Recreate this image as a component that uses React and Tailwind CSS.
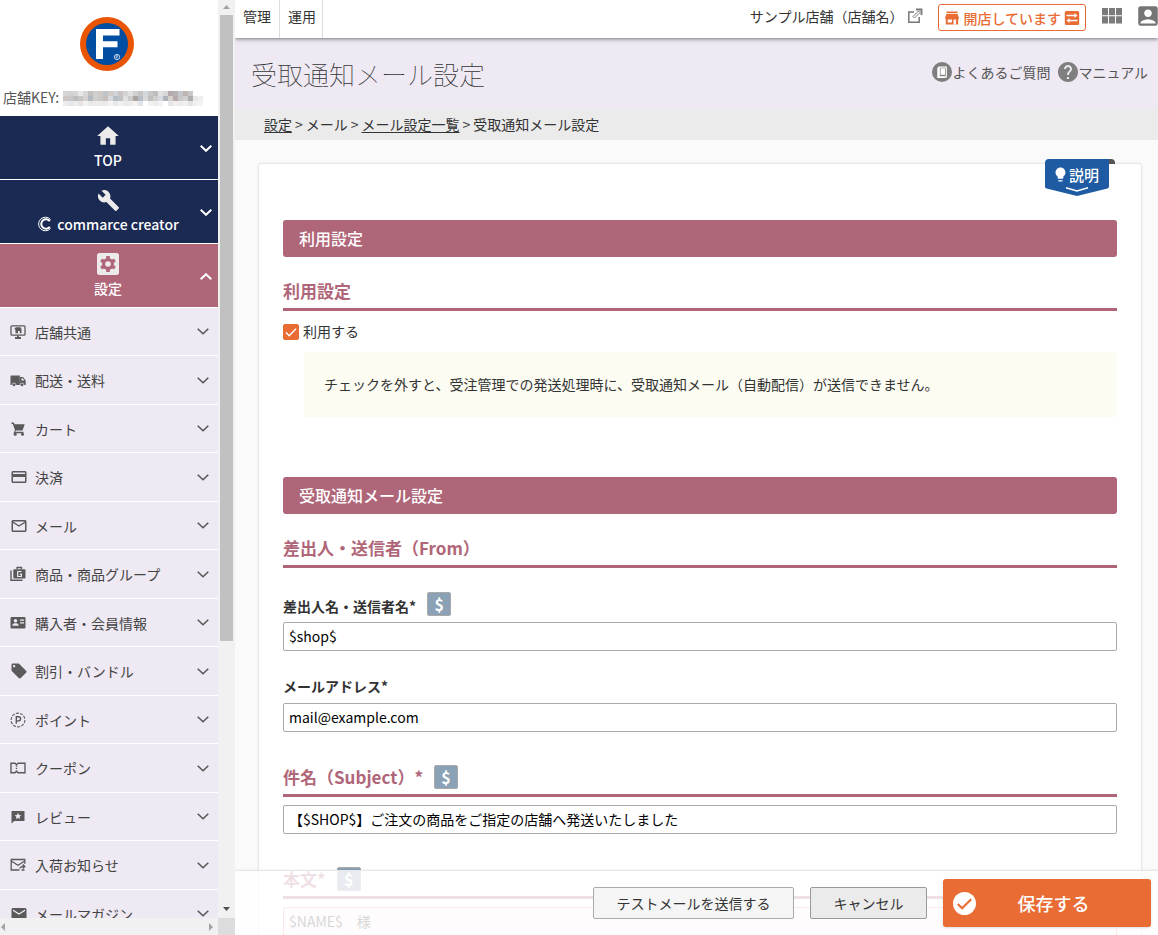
import { useState } from 'react';
import {
  MdAccountBox,
  MdBuild,
  MdEmail,
  MdHelp,
  MdHome,
  MdLightbulb,
  MdLocalOffer,
  MdMailOutline,
  MdPayment,
} from 'react-icons/md';

const Chevron = ({ up = false, className }) => (
  <svg viewBox="0 0 12 7" fill="none" stroke="currentColor" className={className}>
    <path d={up ? 'M.7 6.2 6 1.2l5.300 5' : 'M.7.800 6 5.800 11.300.8'} />
  </svg>
);

const MonitorIcon = () => (
  <svg viewBox="0 0 16 16" className="size-4" fill="none" stroke="currentColor">
    <rect x="1" y="1.800" width="14" height="9.400" rx="1" strokeWidth="1.300" />
    <path d="M5 14h6M8 11.500V14" strokeWidth="1.800" />
    <path d="M4.500 4.500 6 3.300h4.500l1 1.700V9.300H9.800V7H8v2.300H5.500V6.500z" fill="currentColor" stroke="none" />
  </svg>
);

const TruckIcon = () => (
  <svg viewBox="0 0 16 16" className="size-4" fill="currentColor">
    <path d="M.5 4.500a1 1 0 0 1 1-1H9.800v9.500H.5z" />
    <path fillRule="evenodd" d="M9.800 5h3.200l2.700 3.600v4.400H9.800zm1.700 1.200v2.200h2.900l-1.700-2.200z" />
    <circle cx="4" cy="12.800" r="1.800" stroke="#eee9f3" strokeWidth=".7" />
    <circle cx="12" cy="12.800" r="1.800" stroke="#eee9f3" strokeWidth=".7" />
  </svg>
);

const CartIcon = () => (
  <svg viewBox="0 0 16 16" className="size-4" fill="currentColor">
    <path d="M1.500 1.500h2.300l.9 1.700h10l-2.200 6.300H6l-.8 1.300h8.300v1.400H3.500l1.500-3L2.800 3H1.500z" />
    <circle cx="5.200" cy="13.200" r="1.500" />
    <circle cx="12.500" cy="13.200" r="1.500" />
  </svg>
);

const GoodsIcon = () => (
  <svg viewBox="0 0 16 16" className="size-4" fill="none" stroke="currentColor">
    <path d="M1 4.500V14.200h11.500" strokeWidth="1.400" />
    <path d="M7 3.200V1.500h4.500v1.700" strokeWidth="1.300" />
    <rect x="3.300" y="3.200" width="12.200" height="9.300" rx=".8" fill="currentColor" stroke="none" />
    <path d="M11.500 5.500H7.700v5h3.700V8.200H9.800" stroke="#eee9f3" strokeWidth="1.200" />
  </svg>
);

const MemberIcon = () => (
  <svg viewBox="0 0 16 16" className="size-4">
    <rect x=".5" y="2" width="15" height="11.500" rx="1" fill="currentColor" />
    <g fill="#eee9f3">
      <circle cx="5.500" cy="5.800" r="1.700" />
      <path d="M2.300 10.800c0-2 1.800-2.500 3.200-2.500s3.200.5 3.200 2.500z" />
      <path d="M10 4.500h4v1.200h-4zM10 7.200h4v1.200h-4z" />
    </g>
  </svg>
);

const PointIcon = () => (
  <svg viewBox="0 0 16 16" className="size-4" fill="none" stroke="currentColor">
    <circle cx="8" cy="8" r="6.900" strokeDasharray="3 1.300" strokeWidth="1.100" />
    <path d="M6.300 11.800V4.700h2.200a2 2 0 0 1 0 4.200H6.300" strokeWidth="1.400" />
  </svg>
);

const CouponIcon = () => (
  <svg viewBox="0 0 16 16" className="size-4" fill="none" stroke="currentColor" strokeWidth="1.400">
    <path d="M1 3.200h4l1.500 1.500L8 3.200h7v9.600H8l-1.500-1.500L5 12.800H1z" />
    <path d="M6.500 5.500v5" strokeDasharray="1.300 1" />
  </svg>
);

const ReviewIcon = () => (
  <svg viewBox="0 0 16 16" className="size-4">
    <path d="M1.500 2h13v10H4.300l-2.800 2.500z" fill="currentColor" />
    <path d="m8 3.800 1 2.100 2.300.3-1.700 1.600.4 2.300-2-1.100-2 1.100.4-2.300-1.700-1.600L7 5.900z" fill="#eee9f3" />
  </svg>
);

const RestockIcon = () => (
  <svg viewBox="0 0 16 16" className="size-4" fill="none" stroke="currentColor" strokeWidth="1.300">
    <path d="M9.500 13H1.200V2.500h13.600v4.300M1.200 4 8 8.200 14.800 4" />
    <path d="M9.500 11.200 12 9.500h2.500M12.800 7.500l2 2-2 2M14.500 13h-3" />
  </svg>
);

const OpenIcon = () => (
  <svg viewBox="0 0 16 16" className="size-4" fill="none" stroke="#777" strokeWidth="1.500">
    <path d="M7 4H1.800v10.200h10.400V9" />
    <path d="M6 8.500 11.500 3 13 4.500 7.500 10z" strokeWidth="1" />
    <path d="M9 1.500h5.500V7" strokeWidth="1.800" />
  </svg>
);

const StoreIcon = () => (
  <svg viewBox="0 0 16 16" className="size-4" fill="#e86c34">
    <path d="M2.500 1.500h11v1.700h-11z" />
    <path d="M2.500 4h11l1.500 4a1.500 1.500 0 0 1-.8 1.200V14.500h-12.400V9.200A1.500 1.500 0 0 1 1 8z" />
    <path d="M3.700 9.500h4.200v3H3.700zM9.500 9.500h2.500v5H9.500z" fill="#fff" />
  </svg>
);

const SwapIcon = () => (
  <svg viewBox="0 0 16 16" className="size-4">
    <rect x=".8" y="1" width="14.400" height="14" rx="1.500" fill="#e86c34" />
    <path d="M2.500 5.500h9M13.500 10.500h-9" stroke="#fff" strokeWidth="1.300" />
    <path d="M10.500 3 13.500 5.500l-3 2.500zM5.500 8 2.500 10.500l3 2.500z" fill="#fff" />
  </svg>
);

const GridIcon = () => (
  <svg viewBox="0 0 21 16" className="h-4 w-[21px]" fill="#7b7b7b">
    <path d="M0 0h6v7.300H0zM7 0h6v7.300H7zM14 0h6v7.300h-6zM0 8.300h6v7.300H0zM7 8.300h6v7.300H7zM14 8.300h6v7.300h-6z" />
  </svg>
);

const FaqIcon = () => (
  <svg viewBox="0 0 20 20" className="size-5">
    <circle cx="10" cy="10" r="10" fill="#7f7f7f" />
    <path d="M7 5.200h7.300v9.600H7z" fill="#7f7f7f" stroke="#fff" strokeWidth="1.200" />
    <path d="M5.300 6 7.500 4.600v9L5.300 15.500z" fill="#fff" />
    <path d="M5.300 15.400h8" stroke="#fff" strokeWidth="1.200" />
    <path d="M8.500 6.300h4.500v6.500H8.500z" fill="#fff" />
  </svg>
);

const SettingIcon = () => (
  <svg viewBox="0 0 24 24" className="size-6">
    <rect x="1" y="1" width="22" height="22" rx="2.500" fill="#ebebeb" />
    <g fill="#b06679">
      <circle cx="12" cy="12" r="6" />
      <path d="M10.200 4h3.600v16h-3.600z" />
      <path d="M10.200 4h3.600v16h-3.600z" transform="rotate(60 12 12)" />
      <path d="M10.200 4h3.600v16h-3.600z" transform="rotate(120 12 12)" />
    </g>
    <circle cx="12" cy="12" r="2.800" fill="#ebebeb" />
  </svg>
);

const CreatorMark = () => (
  <svg viewBox="0 0 16 16" className="size-4" fill="none" stroke="#fff">
    <path d="M13.500 3.500A6.800 6.800 0 1 0 13.500 12.500" strokeWidth="1" />
    <path d="M12.800 5.300A4.700 4.700 0 1 0 12.800 10.700" strokeWidth="2" />
  </svg>
);

const Logo = () => (
  <svg viewBox="0 0 54 54" className="size-[54px]">
    <circle cx="27" cy="27" r="27" fill="#ea5504" />
    <circle cx="27" cy="27" r="21" fill="#004ea2" />
    <path d="M16 12H39.500v6.500H23v5.800H37.500v6H23V42h-7z" fill="#fff" />
    <circle cx="37" cy="40" r="2.700" fill="none" stroke="#fff" strokeWidth=".7" />
    <path d="M36 41.500v-3h1.500v1.500H36l1.800 1.500" fill="none" stroke="#fff" strokeWidth=".5" />
  </svg>
);

const maskRows = [
  ['#d5d5d5', '#d5d1cf', '#d5d5d5', '#e8e8e8', '#d6d6d6', '#c4c0be', '#d0d0d0', '#cfcac6', '#bfc4c8', '#d0cbc9', '#cfd4d8', '#c9c4c2', '#d4d4d4', '#e3e1e0', '#d0d0d0', '#c4c4c4', '#d3d9dc', '#c8c8c8', '#bdbdbd', '#e3e0df', '#d8d8d8', '#b6a9ad', '#b9b2b2', '#c4c7cb', '#bdb5b2', '#c8c8c8', '#fff', '#fff'],
  ['#cfc7c5', '#c9c9c9', '#bcbcbc', '#c6c6c6', '#d6d2cf', '#b2b9c1', '#cfcfcf', '#c9c9c9', '#c9bfba', '#d6dadd', '#b5bdc5', '#c2c2c2', '#e0e0e0', '#cbcbcb', '#aea3a3', '#b8bec6', '#d8d8d8', '#c2bebc', '#cfcfcf', '#d8dce0', '#adb4bc', '#d6d0cd', '#b9a9aa', '#c8c8c8', '#d0d0d0', '#adadb2', '#e8e8e8', '#efefef'],
  ['#ececec', '#e4e8ea', '#ececec', '#e9e3e1', '#f3f3f3', '#e9e9e9', '#ececec', '#eee9e7', '#e9e9e9', '#f3f3f3', '#e9e9e9', '#eef1f3', '#e9e9e9', '#ececec', '#f6f1ef', '#dfe4e8', '#fff', '#f1f1f1', '#ececec', '#f2f2f2', '#fff', '#e3e6e8', '#f4efed', '#ececec', '#f0f0f0', '#e3e3e3', '#f0f0f0', '#f3f3f3'],
];

const ShopKeyMask = () => (
  <svg viewBox="0 0 140 15" className="mt-1 h-[15px] w-[140px]" shapeRendering="crispEdges">
    {maskRows.map((row, y) =>
      row.map((fill, x) => <rect key={`${x}-${y}`} x={x * 5} y={y * 5} width="5" height="5" fill={fill} />)
    )}
  </svg>
);

const menuItems = [
  { label: '店舗共通', icon: <MonitorIcon /> },
  { label: '配送・送料', icon: <TruckIcon /> },
  { label: 'カート', icon: <CartIcon /> },
  { label: '決済', icon: <MdPayment size={18} /> },
  { label: 'メール', icon: <MdMailOutline size={18} /> },
  { label: '商品・商品グループ', icon: <GoodsIcon /> },
  { label: '購入者・会員情報', icon: <MemberIcon /> },
  { label: '割引・バンドル', icon: <MdLocalOffer size={18} /> },
  { label: 'ポイント', icon: <PointIcon /> },
  { label: 'クーポン', icon: <CouponIcon /> },
  { label: 'レビュー', icon: <ReviewIcon /> },
  { label: '入荷お知らせ', icon: <RestockIcon /> },
  { label: 'メールマガジン', icon: <MdEmail size={18} /> },
];

const NavBlock = ({ icon, open = false, children }) => (
  <button
    type="button"
    aria-expanded={open}
    className={`relative flex h-16 w-full shrink-0 flex-col items-center border-b border-white pr-0.5 pt-2 font-medium text-white ${
      open ? 'bg-[#b06679]' : 'bg-[#1b2a52]'
    }`}
  >
    <span className="flex h-6 items-center text-[#ebebeb]">{icon}</span>
    <span className="flex items-center gap-1 leading-6">{children}</span>
    <Chevron up={open} className="absolute right-1.5 top-[29px] h-[7px] w-3 stroke-2" />
  </button>
);

const Sidebar = () => (
  <aside className="grid w-[235px] shrink-0 grid-cols-[1fr_17px] grid-rows-[1fr_17px]">
    <div className="flex min-h-0 flex-col overflow-hidden bg-white">
      <div className="flex shrink-0 justify-center pr-1 pt-[17px]">
        <Logo />
      </div>
      <div className="flex h-[45px] shrink-0 items-center gap-1 pl-[3px] pt-1.5 text-[#555]">
        <span>店舗KEY:</span>
        <ShopKeyMask />
      </div>
      <nav>
        <NavBlock icon={<MdHome size={26} />}>TOP</NavBlock>
        <NavBlock icon={<MdBuild size={23} />}>
          <CreatorMark />
          <span>commarce creator</span>
        </NavBlock>
        <NavBlock icon={<SettingIcon />} open>
          設定
        </NavBlock>
        <ul>
          {menuItems.map((item) => (
            <li key={item.label} className="h-12 border-b border-white bg-[#eee9f3] even:h-[49px]">
              <button type="button" className="flex h-full w-full items-center pl-2.5 pr-[9px] text-[#444]">
                <span className="flex w-[25px] items-center text-[#5a5a5a]">{item.icon}</span>
                <span className="flex-1 text-left">{item.label}</span>
                <Chevron className="h-[7px] w-3 stroke-[#555] stroke-[1.5]" />
              </button>
            </li>
          ))}
        </ul>
      </nav>
    </div>
    <div className="flex flex-col items-center bg-[#f1f1f1]">
      <svg viewBox="0 0 17 15" className="h-[15px] w-[17px]" fill="#a3a3a3">
        <path d="M5 9 8.500 5 12 9z" />
      </svg>
      <div className="h-[626px] w-[13px] bg-[#c1c1c1]" />
      <svg viewBox="0 0 17 15" className="mt-auto h-[15px] w-[17px]" fill="#505050">
        <path d="M5 4h7L8.500 8z" />
      </svg>
    </div>
    <div className="flex items-center justify-between bg-[#f1f1f1] pr-1">
      <svg viewBox="0 0 6 8" className="h-2 w-1.5" fill="#a3a3a3">
        <path d="M5 0v8L1 4z" />
      </svg>
      <svg viewBox="0 0 6 8" className="h-2 w-1.5" fill="#a3a3a3">
        <path d="M1 0v8l4-4z" />
      </svg>
    </div>
    <div className="bg-[#dcdcdc]" />
  </aside>
);

const Header = () => (
  <header className="z-10 flex h-[38px] shrink-0 items-start bg-white shadow-[0_1px_4px_rgba(0,0,0,0.5)]">
    <nav className="flex h-full text-[#333]">
      <a href="#kanri" className="flex items-center border-r border-[#ddd] px-2 pb-1.5">管理</a>
      <a href="#unyo" className="flex items-center border-r border-[#ddd] pl-2 pr-1.5 pb-1.5">運用</a>
    </nav>
    <div className="ml-auto flex shrink-0 items-start pt-1 text-[#333]">
      <a href="#shop" className="flex h-6 items-center gap-1">
        <span>サンプル店舗（店舗名）</span>
        <OpenIcon />
      </a>
      <button
        type="button"
        className="ml-[15px] flex h-[27px] items-center gap-[3px] rounded-[3px] border border-[#e86c34] px-[5px] font-medium text-[#e86c34]"
      >
        <StoreIcon />
        <span>開店しています</span>
        <SwapIcon />
      </button>
      <button type="button" aria-label="アプリ一覧" className="ml-4 flex h-6 items-center">
        <GridIcon />
      </button>
      <button type="button" aria-label="アカウント" className="-mr-[3px] ml-3 flex h-6 items-center">
        <MdAccountBox size={26} color="#757575" />
      </button>
    </div>
  </header>
);

const VariableButton = () => (
  <button
    type="button"
    aria-label="変数を挿入"
    className="size-6 rounded-xs border border-[#a9a9a9] bg-[#8aa1b6] text-center text-base font-bold leading-5 text-white"
  >
    $
  </button>
);

const SectionBar = ({ children }) => (
  <h2 className="flex h-[37px] items-center rounded-[3px] bg-[#b06679] px-4 pb-0.5 text-base font-medium text-white">
    {children}
  </h2>
);

const SubHeading = ({ children }) => (
  <h3 className="flex items-center gap-[11px] border-b-3 border-[#b06679] pb-[5px] text-[17px] font-bold leading-6 text-[#b06679]">
    {children}
  </h3>
);

const inputClass = 'block h-[29px] w-full rounded-xs border border-[#aaa] bg-white px-[5px] pb-0.5 text-black outline-none';

const HelpBadge = () => (
  <button type="button" className="absolute -top-[5px] right-[26px] h-[37px] w-[70px] text-white">
    <svg viewBox="0 0 70 37" className="absolute inset-0 size-full">
      <path d="M62 0h4a4 4 0 0 1 4 4v1h-8z" fill="#555" />
      <path d="M4 0h60v27.500a2 2 0 0 1-1.500 2L32 37 1.500 29.500a2 2 0 0 1-1.500-2V4a4 4 0 0 1 4-4z" fill="#1f5ba3" />
      <path d="M21 28.800 32 32l11-3.200" fill="none" stroke="#fff" strokeWidth="1.500" />
    </svg>
    <span className="absolute inset-x-0 top-0 flex h-[31px] items-center pl-[7px] text-[15px] font-medium">
      <MdLightbulb size={17} />
      <span>説明</span>
    </span>
  </button>
);

const MailForm = () => {
  const [form, setForm] = useState({
    enabled: true,
    senderName: '$shop$',
    email: 'mail@example.com',
    subject: '【$SHOP$】ご注文の商品をご指定の店舗へ発送いたしました',
    body: '$NAME$　様',
  });

  const handleChange = (e) => {
    const { name, type, value, checked } = e.target;
    setForm((prev) => ({ ...prev, [name]: type === 'checkbox' ? checked : value }));
  };

  return (
    <form className="relative mx-[17px] ml-6 mt-6 rounded-[3px] bg-white px-6 pb-24 pt-14 shadow-[0_0_3px_rgba(0,0,0,0.2)]">
      <HelpBadge />

      {/* 利用設定 */}
      <SectionBar>利用設定</SectionBar>
      <div className="mt-[22px]">
        <SubHeading>利用設定</SubHeading>
      </div>
      <label className="mt-2.5 flex h-[22px] items-center gap-1">
        <span className="grid size-4">
          <input
            type="checkbox"
            name="enabled"
            checked={form.enabled}
            onChange={handleChange}
            className="peer col-start-1 row-start-1 size-4 appearance-none rounded-xs border border-[#aaa] checked:border-[#e86c34] checked:bg-[#e86c34]"
          />
          <svg
            viewBox="0 0 16 16"
            className="pointer-events-none invisible col-start-1 row-start-1 size-4 fill-none stroke-white stroke-[1.5] peer-checked:visible"
          >
            <path d="m3 8.500 3.200 3.200L13 4.800" />
          </svg>
        </span>
        <span className="pb-0.5">利用する</span>
      </label>
      <p className="ml-[21px] mt-[9px] bg-[#fcfcf2] px-5 py-[22px] leading-[21px]">
        チェックを外すと、受注管理での発送処理時に、受取通知メール（自動配信）が送信できません。
      </p>

      {/* 受取通知メール設定 */}
      <div className="mt-[60px]">
        <SectionBar>受取通知メール設定</SectionBar>
      </div>
      <div className="mt-[22px]">
        <SubHeading>差出人・送信者（From）</SubHeading>
      </div>
      <div className="mt-6 flex h-6 items-center gap-[11px]">
        <label htmlFor="senderName" className="pt-1 font-bold">差出人名・送信者名*</label>
        <VariableButton />
      </div>
      <input
        id="senderName"
        type="text"
        name="senderName"
        value={form.senderName}
        onChange={handleChange}
        className={`mt-1.5 ${inputClass}`}
      />
      <label htmlFor="email" className="mt-[23px] block leading-6 font-bold">メールアドレス*</label>
      <input
        id="email"
        type="email"
        name="email"
        value={form.email}
        onChange={handleChange}
        className={`mt-[5px] ${inputClass}`}
      />
      <div className="mt-[33px]">
        <SubHeading>
          <label htmlFor="subject">件名（Subject）*</label>
          <VariableButton />
        </SubHeading>
      </div>
      <input
        id="subject"
        type="text"
        name="subject"
        value={form.subject}
        onChange={handleChange}
        className={`mt-2 ${inputClass}`}
      />
      <div className="mt-[33px]">
        <SubHeading>
          <label htmlFor="body">本文*</label>
          <VariableButton />
        </SubHeading>
      </div>
      <textarea
        id="body"
        name="body"
        rows={12}
        value={form.body}
        onChange={handleChange}
        className="mt-2 block w-full resize-none overflow-y-scroll rounded-xs border border-[#e39aa0] bg-[#fcf0f3] px-[5px] py-[3px] outline-none"
      />
    </form>
  );
};

const ActionBar = () => (
  <div className="absolute inset-x-0 bottom-0 flex h-[65px] items-center justify-end gap-4 border-t border-[#e8e8e8] bg-white/80 pr-[7px] shadow-[0_0_2px_rgba(0,0,0,0.1)]">
    <button type="button" className="h-8 w-[201px] rounded-xs border border-[#aaa] bg-[#f5f5f5] text-[#333]">
      テストメールを送信する
    </button>
    <button type="button" className="h-8 w-[117px] rounded-xs border border-[#999] bg-[#ebebeb] text-[#333]">
      キャンセル
    </button>
    <button
      type="submit"
      className="flex h-12 w-52 items-center rounded-[3px] bg-[#e86c34] pl-2.5 pr-5 text-lg font-medium text-white shadow-sm"
    >
      <svg viewBox="0 0 24 24" className="size-[23px] shrink-0">
        <circle cx="12" cy="12" r="12" fill="#fff" />
        <path d="m5 12.500 4.500 4.500L19 7.500" fill="none" stroke="#e86c34" strokeWidth="2.200" />
      </svg>
      <span className="flex-1">保存する</span>
    </button>
  </div>
);

const App = () => (
  <div className="flex h-screen overflow-hidden bg-[#fafafa] font-['Noto_Sans_CJK_JP',sans-serif] text-sm text-[#333]">
    <Sidebar />
    <main className="relative flex min-w-0 flex-1 flex-col overflow-hidden">
      <Header />
      <div className="min-h-0 flex-1 overflow-hidden">
        <div className="flex h-[71px] items-center justify-between bg-[#eee9f3] pl-4 pr-2.5">
          <h1 className="text-[26px] font-thin text-[#333]">受取通知メール設定</h1>
          <div className="flex items-center gap-2 pb-1 text-[#555]">
            <a href="#faq" className="flex items-center">
              <FaqIcon />
              よくあるご質問
            </a>
            <a href="#manual" className="flex items-center">
              <MdHelp size={24} color="#7f7f7f" className="-mx-0.5" />
              マニュアル
            </a>
          </div>
        </div>
        <nav className="flex h-[31px] items-center gap-[3px] bg-[#ebebeb] pb-0.5 pl-[29px]">
          <a href="#setting" className="underline underline-offset-2">設定</a>
          <span>&gt;</span>
          <span>メール</span>
          <span>&gt;</span>
          <a href="#mail" className="underline underline-offset-2">メール設定一覧</a>
          <span>&gt;</span>
          <span>受取通知メール設定</span>
        </nav>
        <MailForm />
      </div>
      <ActionBar />
    </main>
  </div>
);

export default App;
